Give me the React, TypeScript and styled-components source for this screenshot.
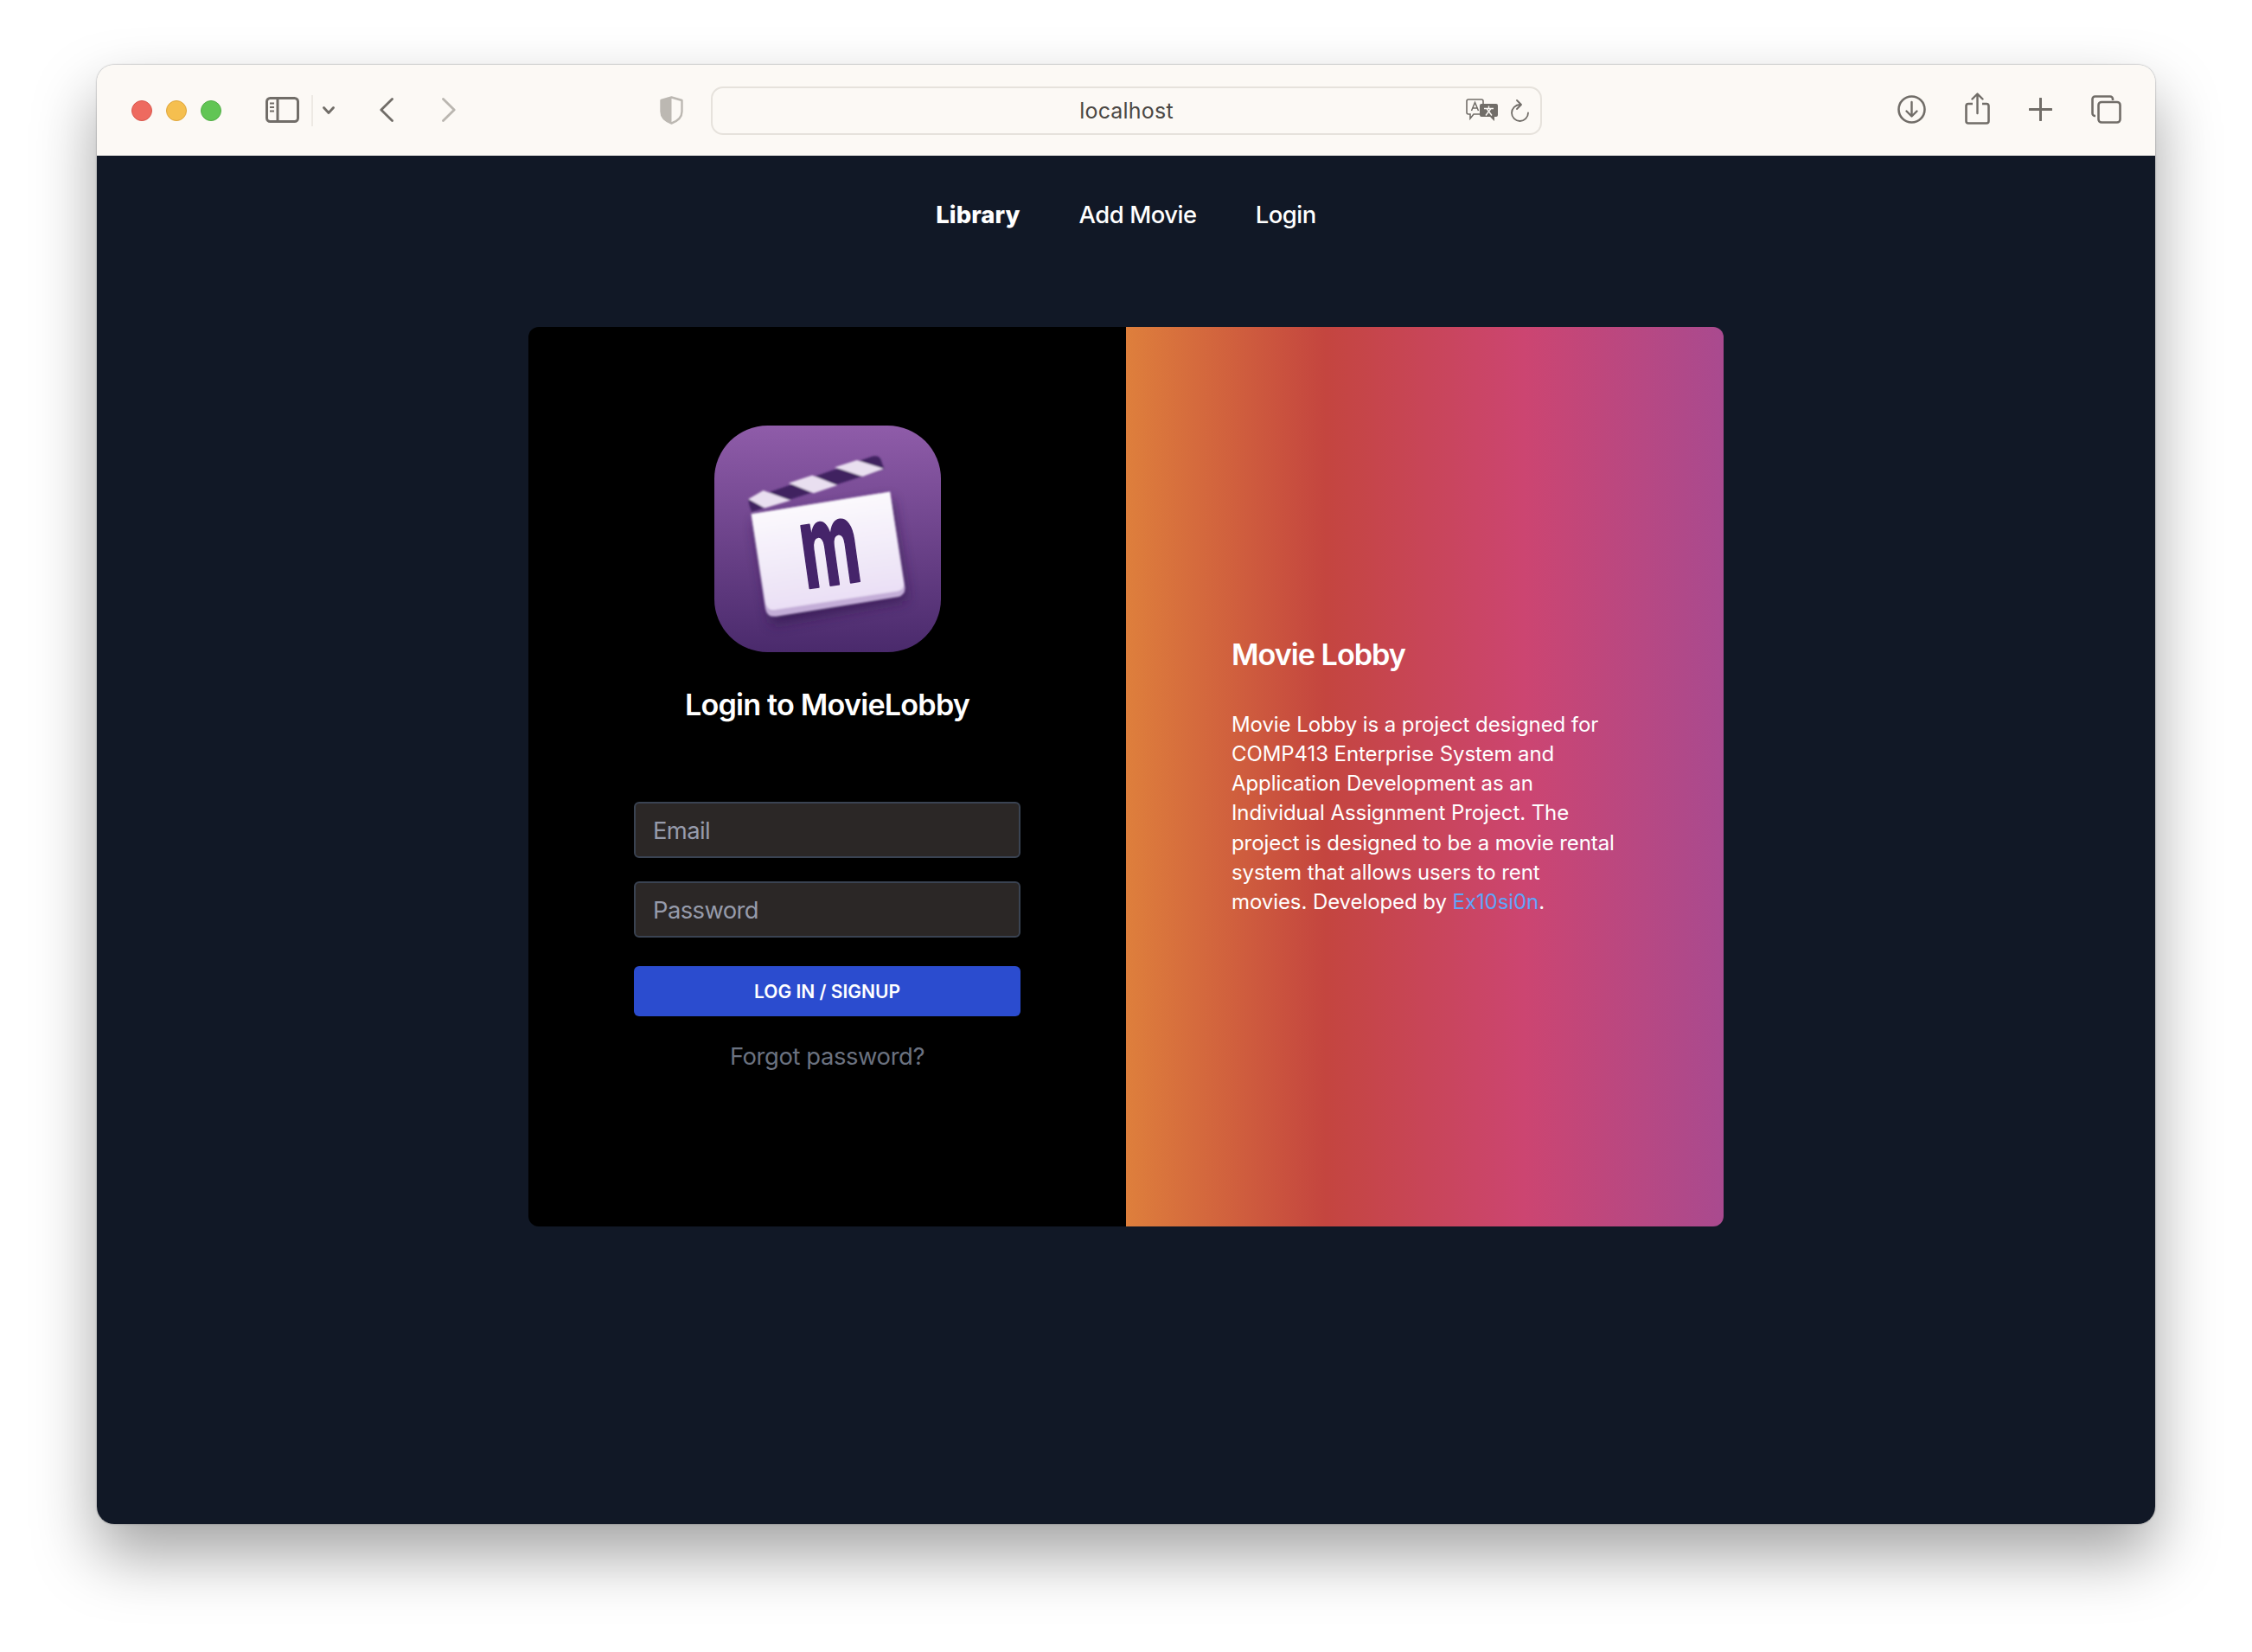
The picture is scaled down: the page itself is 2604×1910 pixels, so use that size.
import React from "react";
import styled, { createGlobalStyle } from "styled-components";

const GlobalStyle = createGlobalStyle`
  html, body {
    margin: 0;
    background: #ffffff;
    font-family: Inter, "Liberation Sans", sans-serif;
    overflow: hidden;
  }
  * {
    box-sizing: border-box;
  }
`;

const Page = styled.div`
  width: 2604px;
  height: 1910px;
  padding: 75px 112px 148px;
`;

const BrowserWindow = styled.div`
  height: 100%;
  display: flex;
  flex-direction: column;
  border-radius: 20px;
  overflow: hidden;
  box-shadow: 0 36px 72px rgba(0, 0, 0, 0.36), 0 0 2px rgba(0, 0, 0, 0.45);
`;

const TitleBar = styled.header`
  flex: 0 0 105px;
  display: grid;
  grid-template-columns: 1fr 960px 1fr;
  align-items: center;
  padding: 0 39px 0 40px;
  background: #fcf9f5;
`;

const LeftTools = styled.div`
  display: flex;
  align-items: center;
`;

const RightTools = styled.div`
  display: flex;
  align-items: center;
  justify-content: flex-end;
  gap: 45px;
  margin-bottom: 2px;
`;

const Lights = styled.div`
  display: flex;
  gap: 16px;
  margin-right: 51px;
`;

const Light = styled.span<{ $fill: string; $edge: string }>`
  width: 24px;
  height: 24px;
  border-radius: 50%;
  background: ${(p) => p.$fill};
  border: 1px solid ${(p) => p.$edge};
`;

const SidebarIcon = styled.svg`
  margin-bottom: 2px;
`;

const Divider = styled.span`
  width: 2px;
  height: 36px;
  margin: 0 11px 0 14px;
  background: #ede9e3;
`;

const Chevron = styled.svg`
  margin-right: 52px;
`;

const BackIcon = styled.svg`
  margin-right: 56px;
  margin-bottom: 2px;
`;

const ForwardIcon = styled.svg`
  margin-bottom: 2px;
`;

const Shield = styled.svg`
  margin-left: auto;
  margin-right: 33px;
  margin-bottom: 1px;
`;

const AddressBar = styled.div`
  height: 56px;
  display: grid;
  grid-template-columns: 1fr auto 1fr;
  align-items: center;
  margin-left: -1px;
  padding: 0 13px 0 14px;
  border: 2px solid #e6e2dc;
  border-radius: 14px;
  color: #4b4844;
  font-size: 25px;
  letter-spacing: 0.2px;
`;

const AddressTools = styled.div`
  grid-column: 3;
  display: flex;
  align-items: center;
  justify-content: flex-end;
  gap: 15px;
`;

const ShareIcon = styled.svg`
  margin-bottom: 3px;
`;

const Content = styled.main`
  flex: 1;
  display: flex;
  flex-direction: column;
  align-items: center;
  background: #111826;
`;

const Nav = styled.nav`
  height: 198px;
  padding-top: 51px;
  display: flex;
  align-items: flex-start;
  justify-content: center;
  gap: 68px;
`;

const NavLink = styled.a<{ $active?: boolean }>`
  color: #ffffff;
  font-size: 27.4px;
  line-height: 34px;
  font-weight: ${(p) => (p.$active ? 800 : 500)};
  letter-spacing: ${(p) => (p.$active ? "0.1px" : "-0.45px")};
`;

const Card = styled.section`
  width: 1382px;
  height: 1040px;
  display: grid;
  grid-template-columns: 1fr 1fr;
  border-radius: 12px;
  overflow: hidden;
`;

const LoginPanel = styled.div`
  display: flex;
  flex-direction: column;
  align-items: center;
  padding-top: 114px;
  background: #000000;
`;

const LoginTitle = styled.h4`
  margin: 40px 0 0;
  color: #ffffff;
  font-size: 34.2px;
  line-height: 41px;
  font-weight: 600;
  letter-spacing: -0.8px;
`;

const LoginForm = styled.form`
  width: 447px;
  margin-top: 92px;
  display: flex;
  flex-direction: column;
`;

const TextInput = styled.input`
  width: 100%;
  height: 65px;
  margin-bottom: 27px;
  padding: 0 20px;
  border: 2px solid #3a4352;
  border-radius: 6px;
  outline: none;
  background: #2b2726;
  color: #ffffff;
  font-family: inherit;
  font-size: 27.4px;
  letter-spacing: -0.6px;
  &::placeholder {
    color: #969bab;
    opacity: 1;
  }
`;

const SubmitButton = styled.button`
  height: 58px;
  margin-top: 6px;
  border: 0;
  border-radius: 6px;
  background: #2b4ccf;
  color: #ffffff;
  font-family: inherit;
  font-size: 21px;
  font-weight: 600;
  text-transform: uppercase;
`;

const ForgotLink = styled.a`
  margin-top: 29px;
  text-align: center;
  color: #6b7280;
  font-size: 27.4px;
  line-height: 34px;
  letter-spacing: -0.4px;
`;

const InfoPanel = styled.div`
  display: flex;
  flex-direction: column;
  justify-content: center;
  padding: 0 122px;
  color: #ffffff;
  background: linear-gradient(to right, #de7f3c, #c4453f, #cc4571, #a94a8f);
`;

const InfoTitle = styled.h4`
  margin: 0 0 44px;
  font-size: 34.2px;
  line-height: 41px;
  font-weight: 600;
  letter-spacing: -1px;
`;

const InfoText = styled.p`
  margin: 0;
  font-size: 24px;
  line-height: 34.2px;
  letter-spacing: -0.08px;
`;

const InfoLink = styled.a`
  color: #60a5fa;
`;

const ink = "#716d68";

const MovieLogo = () => (
  <svg width="262" height="262" viewBox="75 65 787 787">
    <defs>
      <linearGradient id="tile" x1="0" y1="0" x2="0" y2="1">
        <stop offset="0" stopColor="#8f5ca9" />
        <stop offset="1" stopColor="#4a2a6c" />
      </linearGradient>
      <linearGradient id="board" x1="0" y1="0" x2="0.2" y2="1">
        <stop offset="0" stopColor="#ffffff" />
        <stop offset="1" stopColor="#eadff5" />
      </linearGradient>
      <filter id="soft" x="-30%" y="-30%" width="160%" height="160%">
        <feGaussianBlur stdDeviation="22" />
      </filter>
      <filter id="slight" x="-5%" y="-5%" width="110%" height="110%">
        <feGaussianBlur stdDeviation="3" />
      </filter>
    </defs>
    <rect x="75" y="65" width="787" height="787" rx="185" fill="url(#tile)" />
    <path d="M215 400 L690 320 L745 670 L275 755 Z" fill="#2e1748" opacity="0.7" filter="url(#soft)" />
    <g filter="url(#slight)">
      <path
        d="M193 322 L625 172 Q648 168 654 185 L665 217 L205 365 Q195 345 193 322 Z"
        fill="#3f2161"
      />
      <path d="M193 320 L245 290 L340 325 L250 352 Z" fill="#e9dff0" />
      <path d="M333 265 L415 238 L502 272 L420 300 Z" fill="#e9dff0" />
      <path d="M493 210 L570 185 L664 215 L590 242 Z" fill="#e9dff0" />
      <path
        d="M203 372 L685 295 L737 625 Q740 652 715 660 L290 728 Q258 732 252 700 Z"
        fill="#c4aed8"
      />
      <path
        d="M203 372 L685 295 L733 612 Q735 635 712 640 L285 705 Q258 708 252 680 Z"
        fill="url(#board)"
      />
    </g>
    <text
      transform="translate(392 632) rotate(-8) scale(0.56 1)"
      fontFamily="Inter, sans-serif"
      fontWeight="700"
      fontSize="400"
      fill="#45246a"
      stroke="#45246a"
      strokeWidth="7"
      strokeLinejoin="round"
    >
      m
    </text>
  </svg>
);

const App: React.FC = () => (
  <>
    <GlobalStyle />
    <Page>
      <BrowserWindow>
        <TitleBar>
          <LeftTools>
            <Lights>
              <Light $fill="#ee6a5f" $edge="#d9574d" />
              <Light $fill="#f5bf4f" $edge="#dfa63c" />
              <Light $fill="#61c554" $edge="#52ad46" />
            </Lights>
            <SidebarIcon width="39" height="30" viewBox="0 0 39 30" fill="none">
              <rect x="1.5" y="1.5" width="36" height="27" rx="4" stroke={ink} strokeWidth="3" />
              <path d="M14 2v26" stroke={ink} strokeWidth="3" />
              <path d="M5 7.5h5M5 12h5M5 16.500h5" stroke={ink} strokeWidth="2" />
            </SidebarIcon>
            <Divider />
            <Chevron width="14" height="9" viewBox="0 0 14 9" fill="none">
              <path d="M1.5 1.5L7 7.5L12.5 1.5" stroke={ink} strokeWidth="2.8" strokeLinecap="round" strokeLinejoin="round" />
            </Chevron>
            <BackIcon width="16" height="28" viewBox="0 0 16 28" fill="none">
              <path d="M14.5 1.5L1.8 14L14.5 26.5" stroke={ink} strokeWidth="2.8" strokeLinecap="round" strokeLinejoin="round" />
            </BackIcon>
            <ForwardIcon width="16" height="28" viewBox="0 0 16 28" fill="none">
              <path d="M1.5 1.5L14.2 14L1.5 26.5" stroke="#bab6b0" strokeWidth="2.8" strokeLinecap="round" strokeLinejoin="round" />
            </ForwardIcon>
            <Shield width="27" height="33" viewBox="0 0 27 33" fill="none">
              <path d="M13.5 1.5L25.5 5V18C25.5 25 19 29.5 13.5 31.5C8 29.5 1.5 25 1.5 18V5Z" stroke="#bcb8b2" strokeWidth="2.4" strokeLinejoin="round" />
              <path d="M13.5 1.5V31.5C8 29.5 1.5 25 1.5 18V5Z" fill="#bcb8b2" />
            </Shield>
          </LeftTools>
          <AddressBar>
            <span />
            <span>localhost</span>
            <AddressTools>
              <svg width="37" height="27" viewBox="0 0 37 27" fill="none">
                <path d="M3 1h15a2 2 0 0 1 2 2v13a2 2 0 0 1-2 2H9l-4 5v-5H3a2 2 0 0 1-2-2V3a2 2 0 0 1 2-2z" stroke={ink} strokeWidth="1.6" fill="#fcf9f5" />
                <path d="M6.5 14L10.5 4.500L14.5 14M8 11h5" stroke={ink} strokeWidth="1.5" />
                <path d="M18 6h17a2 2 0 0 1 2 2v11a2 2 0 0 1-2 2h-2v5l-5-5H18a2 2 0 0 1-2-2V8a2 2 0 0 1 2-2z" fill={ink} />
                <path d="M21 11.500h11M26.500 8.500v3M23 19.500l6-8M30 19.500l-6-8" stroke="#fcf9f5" strokeWidth="1.4" />
              </svg>
              <svg width="21" height="26" viewBox="0 0 21 26" fill="none">
                <path d="M20 15.500A9.500 9.500 0 1 1 10.500 6" stroke={ink} strokeWidth="1.8" strokeLinecap="round" />
                <path d="M7 1L12 6L7 11" stroke={ink} strokeWidth="1.8" strokeLinecap="round" strokeLinejoin="round" />
              </svg>
            </AddressTools>
          </AddressBar>
          <RightTools>
            <svg width="33" height="33" viewBox="0 0 33 33" fill="none">
              <circle cx="16.500" cy="16.500" r="15" stroke={ink} strokeWidth="2.6" />
              <path d="M16.500 8V24M10.500 18.500L16.500 24.500L22.500 18.500" stroke={ink} strokeWidth="2.4" strokeLinecap="round" strokeLinejoin="round" />
            </svg>
            <ShareIcon width="29" height="37" viewBox="0 0 29 37" fill="none">
              <path d="M9 13H4a2.500 2.500 0 0 0-2.500 2.500V33A2.500 2.500 0 0 0 4 35.500h21a2.500 2.500 0 0 0 2.500-2.500V15.500A2.500 2.500 0 0 0 25 13h-5" stroke={ink} strokeWidth="2.6" />
              <path d="M14.500 24V2M8.500 7.500L14.500 1.500L20.500 7.500" stroke={ink} strokeWidth="2.4" strokeLinecap="round" strokeLinejoin="round" />
            </ShareIcon>
            <svg width="27" height="27" viewBox="0 0 27 27" fill="none">
              <path d="M13.500 1V26M1 13.500H26" stroke={ink} strokeWidth="3" strokeLinecap="round" />
            </svg>
            <svg width="35" height="33" viewBox="0 0 35 33" fill="none">
              <path d="M5 24H4.500A3 3 0 0 1 1.500 21V4.500A3 3 0 0 1 4.500 1.500H22A3 3 0 0 1 25 4.500V6" stroke={ink} strokeWidth="2.6" />
              <rect x="8.500" y="8" width="25" height="23.500" rx="3.500" stroke={ink} strokeWidth="2.6" />
            </svg>
          </RightTools>
        </TitleBar>
        <Content>
          <Nav>
            <NavLink $active>Library</NavLink>
            <NavLink>Add Movie</NavLink>
            <NavLink>Login</NavLink>
          </Nav>
          <Card>
            <LoginPanel>
              <MovieLogo />
              <LoginTitle>Login to MovieLobby</LoginTitle>
              <LoginForm>
                <TextInput type="text" placeholder="Email" />
                <TextInput type="password" placeholder="Password" />
                <SubmitButton type="button">Log in / Signup</SubmitButton>
                <ForgotLink>Forgot password?</ForgotLink>
              </LoginForm>
            </LoginPanel>
            <InfoPanel>
              <InfoTitle>Movie Lobby</InfoTitle>
              <InfoText>
                Movie Lobby is a project designed for COMP413 Enterprise System and Application
                Development as an Individual Assignment Project. The project is designed to be a
                movie rental system that allows users to rent movies. Developed by{" "}
                <InfoLink>Ex10si0n</InfoLink>.
              </InfoText>
            </InfoPanel>
          </Card>
        </Content>
      </BrowserWindow>
    </Page>
  </>
);

export default App;
